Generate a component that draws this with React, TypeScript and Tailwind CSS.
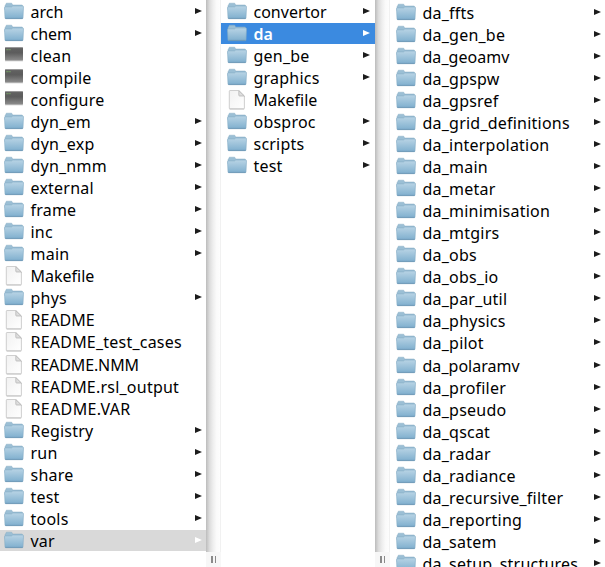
import React from 'react';

type Kind = 'folder' | 'exec' | 'file';
type Item = { name: string; kind?: Kind; state?: 'active' | 'path'; tracking?: string };

const first: Item[] = [
  { name: 'arch', tracking: 'tracking-normal' },
  { name: 'chem', tracking: 'tracking-normal' },
  { name: 'clean', kind: 'exec' },
  { name: 'compile', kind: 'exec' },
  { name: 'configure', kind: 'exec' },
  { name: 'dyn_em', tracking: 'tracking-[0.25px]' },
  { name: 'dyn_exp', tracking: 'tracking-[0.3px]' },
  { name: 'dyn_nmm' },
  { name: 'external' },
  { name: 'frame' },
  { name: 'inc' },
  { name: 'main' },
  { name: 'Makefile', kind: 'file', tracking: 'tracking-normal' },
  { name: 'phys' },
  { name: 'README', kind: 'file', tracking: 'tracking-normal' },
  { name: 'README_test_cases', kind: 'file' },
  { name: 'README.NMM', kind: 'file', tracking: 'tracking-[-0.12px]' },
  { name: 'README.rsl_output', kind: 'file' },
  { name: 'README.VAR', kind: 'file', tracking: 'tracking-[0.35px]' },
  { name: 'Registry' },
  { name: 'run' },
  { name: 'share' },
  { name: 'test' },
  { name: 'tools' },
  { name: 'var', state: 'path' },
];

const second: Item[] = [
  { name: 'convertor', tracking: 'tracking-normal' },
  { name: 'da', state: 'active', tracking: 'tracking-normal' },
  { name: 'gen_be' },
  { name: 'graphics' },
  { name: 'Makefile', kind: 'file', tracking: 'tracking-normal' },
  { name: 'obsproc' },
  { name: 'scripts' },
  { name: 'test' },
];

const third: Item[] = [
  'da_ffts', 'da_gen_be', 'da_geoamv', 'da_gpspw', 'da_gpsref', 'da_grid_definitions',
  'da_interpolation', 'da_main', 'da_metar', 'da_minimisation', 'da_mtgirs', 'da_obs',
  'da_obs_io', 'da_par_util', 'da_physics', 'da_pilot', 'da_polaramv', 'da_profiler',
  'da_pseudo', 'da_qscat', 'da_radar', 'da_radiance', 'da_recursive_filter',
  'da_reporting', 'da_satem', 'da_setup_structures',
].map((name) => ({
  name,
  tracking: name.endsWith('amv') ? 'tracking-[0.03px]' : undefined,
}));

function Gradients() {
  return (
    <svg className="absolute h-0 w-0" aria-hidden="true">
      <defs>
        <linearGradient id="folder" x1="0" y1="0" x2="0" y2="1">
          <stop offset="0" stopColor="#b9d4e5" />
          <stop offset="1" stopColor="#7fafce" />
        </linearGradient>
        <linearGradient id="exec" x1="0" y1="0" x2="0" y2="1">
          <stop offset="0" stopColor="#626262" />
          <stop offset="0.4" stopColor="#5c5c5c" />
          <stop offset="1" stopColor="#8e8e8e" />
        </linearGradient>
        <linearGradient id="page" x1="0" y1="0" x2="1" y2="1">
          <stop offset="0" stopColor="#f1f1f1" />
          <stop offset="1" stopColor="#ffffff" />
        </linearGradient>
      </defs>
    </svg>
  );
}

function Icon({ kind }: { kind: Kind }) {
  return (
    <svg className="h-5 w-5 shrink-0" viewBox="0 0 20 20">
      {kind === 'folder' && (
        <>
          <path d="M1 8V3.800q0-.8.8-.8V2.400q0-1.200 1-1.200h4.400q1 0 1.200 1.300l.2.5h9.100q.9 0 .9.900V8z" fill="#9bbfd5" stroke="#89aec5" strokeWidth=".5" />
          <path d="M.5 5.700q0-.8.8-.8h5.900q.7 0 1-.5t1-.4h9.500q.8 0 .8.800L19 16q0 .7-.8.700H1.800q-.8 0-.8-.7z" fill="url(#folder)" stroke="#84acc6" strokeWidth=".6" />
          <path d="M1.300 16.400h17.400" stroke="#6894b2" strokeWidth=".8" />
        </>
      )}
      {kind === 'exec' && (
        <>
          <rect x="1" y="1.500" width="18" height="13.200" rx=".6" fill="url(#exec)" />
          <path d="M1 1.800h18" stroke="#777" strokeWidth=".6" />
          <path d="M2.200 3.600h4.600" stroke="#719064" strokeWidth="1.100" strokeDasharray="2.500 .4" />
          <path d="M1 14.900h18" stroke="#b5b5b5" strokeWidth=".6" />
        </>
      )}
      {kind === 'file' && (
        <>
          <path d="M3 .5h8.800L17.400 6v12.200q0 .7-.7.700H3q-.7 0-.7-.7V1.200Q2.300.5 3 .5z" fill="url(#page)" stroke="#cacaca" strokeWidth=".9" />
          <path d="M11.800.6v4.600q0 .8.800.8h4.700z" fill="#dedede" stroke="#b0b0b0" strokeWidth=".7" />
          <path d="M2.500 19h14.700" stroke="#b3b3b3" strokeWidth=".6" />
        </>
      )}
    </svg>
  );
}

function Row({ item, rowClass }: { item: Item; rowClass: string }) {
  const { name, kind = 'folder', state, tracking = 'tracking-[0.22px]' } = item;
  const tone =
    state === 'active'
      ? 'bg-[#3b8ae0] font-semibold text-white'
      : state === 'path'
        ? 'bg-[#d9d9d9] text-black'
        : 'text-black';
  const arrow = state ? 'text-white' : 'text-[#1c1c1c]';
  return (
    <li className="h-[22.04px] shrink-0">
      <div className={`flex h-[21px] items-start ${tone} ${rowClass}`}>
        <div className="pt-px">
          <Icon kind={kind} />
        </div>
        <span className={`ml-[6.5px] flex-1 whitespace-nowrap text-[16px] leading-[22px] ${tracking}`}>{name}</span>
        {kind === 'folder' && (
          <svg className="mt-[7px] h-[6px] w-[7px] shrink-0" viewBox="0 0 7 6">
            <path className={arrow} d="M0 0L7 3L0 6z" fill="currentColor" />
          </svg>
        )}
      </div>
    </li>
  );
}

function Divider() {
  return (
    <div className="flex w-[15px] shrink-0 flex-col">
      <div className="flex-1 border-r border-[#f1f1f1] bg-[linear-gradient(to_right,#bcbcbc,#dcdcdc_25%,#eeeeee_50%,#fafafa_75%,#fdfdfd)]" />
      <div className="flex h-[15px] items-center justify-center gap-[2px] bg-[#f7f7f7]">
        <i className="h-[7px] w-[1.5px] bg-[#8a8a8a]" />
        <i className="h-[7px] w-[1.5px] bg-[#8a8a8a]" />
      </div>
    </div>
  );
}

export default function App() {
  return (
    <main className="flex h-[567px] w-[605px] overflow-hidden bg-white font-['Noto_Sans','Open_Sans',sans-serif]">
      <Gradients />
      <ul className="w-[206px] shrink-0 pt-px">
        {first.map((item) => <Row key={item.name} item={item} rowClass="pl-[4px] pr-[4px]" />)}
      </ul>
      <Divider />
      <ul className="w-[154px] shrink-0 pt-px">
        {second.map((item) => <Row key={item.name} item={item} rowClass="pl-[6px] pr-[5px]" />)}
      </ul>
      <Divider />
      <ul className="w-[215px] shrink-0 pt-[2px]">
        {third.map((item) => <Row key={item.name} item={item} rowClass="pl-[6px] pr-[4px]" />)}
      </ul>
    </main>
  );
}
